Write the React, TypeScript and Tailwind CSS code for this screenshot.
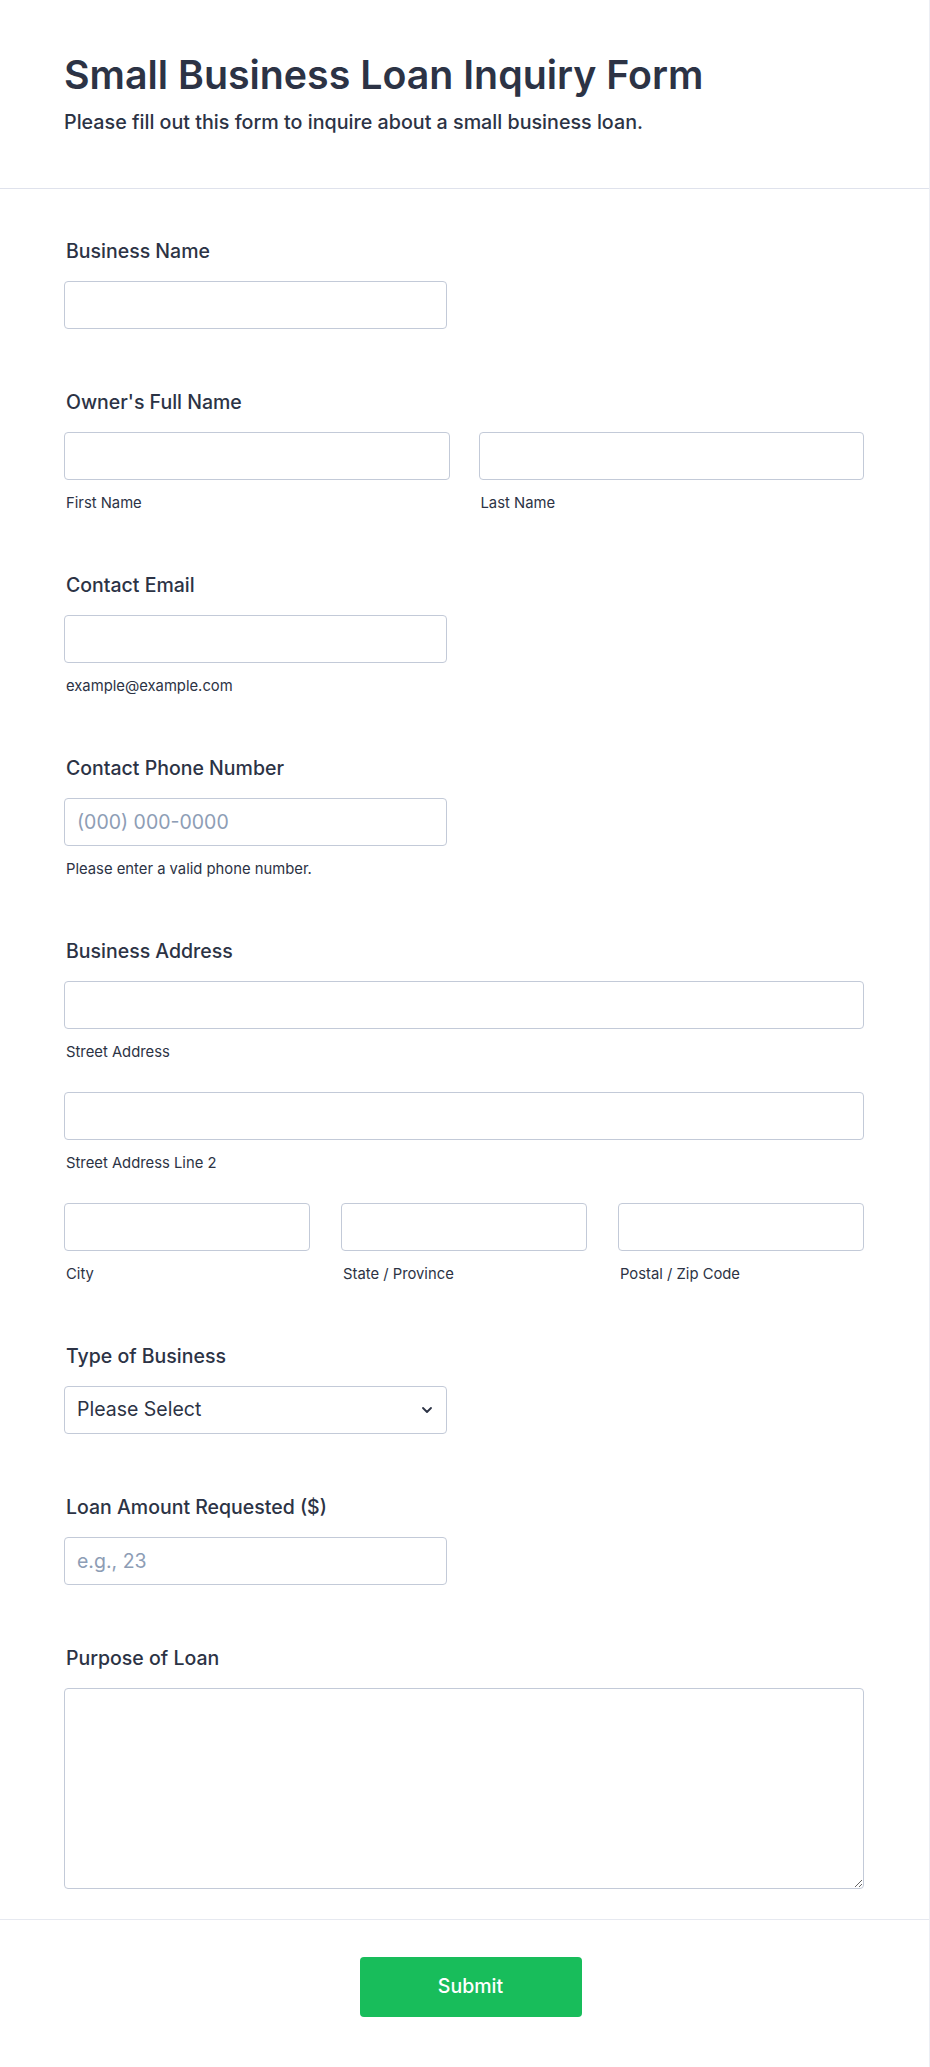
import { ChevronDown } from "lucide-react";

const inputCls =
  "block h-[48px] w-full rounded-[4px] border border-[#c3cad8] bg-white px-[12px] text-[19.5px] text-[#2c3345] placeholder:text-[#8d9db5] outline-none";

function Label({ children }: { children: React.ReactNode }) {
  return <label className="block pl-[2px] text-[19.5px] leading-[23px] font-medium">{children}</label>;
}

function SubLabel({ children }: { children: React.ReactNode }) {
  return <span className="mt-[15px] block pl-[2px] text-[14.8px] leading-[17px]">{children}</span>;
}

export default function App() {
  return (
    <div className="min-h-screen w-full border-r border-[#eceef4] bg-white font-['Inter',sans-serif] text-[#2c3345]">
      {/* Header */}
      <header className="border-b border-[#dfe2ec] pt-[52px] pr-[65px] pb-[54px] pl-[64px]">
        <h1 className="text-[39.3px] leading-[46px] font-semibold">Small Business Loan Inquiry Form</h1>
        <p className="mt-[13px] text-[19.7px] leading-[23px] font-medium">
          Please fill out this form to inquire about a small business loan.
        </p>
      </header>

      {/* Fields */}
      <form className="flex flex-col gap-[62px] pt-[51px] pr-[65px] pb-[30px] pl-[64px]">
        <div>
          <Label>Business Name</Label>
          <input className={`${inputCls} mt-[18px] !w-[383px]`} />
        </div>

        <div>
          <Label>Owner's Full Name</Label>
          <div className="mt-[18px] grid grid-cols-2 gap-x-[29px]">
            <div>
              <input className={inputCls} />
              <SubLabel>First Name</SubLabel>
            </div>
            <div>
              <input className={inputCls} />
              <SubLabel>Last Name</SubLabel>
            </div>
          </div>
        </div>

        <div>
          <Label>Contact Email</Label>
          <input type="email" className={`${inputCls} mt-[18px] !w-[383px]`} />
          <SubLabel>example@example.com</SubLabel>
        </div>

        <div>
          <Label>Contact Phone Number</Label>
          <input type="tel" placeholder="(000) 000-0000" className={`${inputCls} mt-[18px] !w-[383px]`} />
          <SubLabel>Please enter a valid phone number.</SubLabel>
        </div>

        <div>
          <Label>Business Address</Label>
          <input className={`${inputCls} mt-[18px]`} />
          <SubLabel>Street Address</SubLabel>
          <input className={`${inputCls} mt-[31px]`} />
          <SubLabel>Street Address Line 2</SubLabel>
          <div className="mt-[31px] grid grid-cols-3 gap-x-[31px]">
            <div>
              <input className={inputCls} />
              <SubLabel>City</SubLabel>
            </div>
            <div>
              <input className={inputCls} />
              <SubLabel>State / Province</SubLabel>
            </div>
            <div>
              <input className={inputCls} />
              <SubLabel>Postal / Zip Code</SubLabel>
            </div>
          </div>
        </div>

        <div>
          <Label>Type of Business</Label>
          <div className="relative mt-[18px] w-[383px]">
            <select className={`${inputCls} appearance-none pr-[40px]`} defaultValue="">
              <option value="">Please Select</option>
              <option>Sole Proprietorship</option>
              <option>Partnership</option>
              <option>LLC</option>
              <option>Corporation</option>
            </select>
            <ChevronDown
              className="pointer-events-none absolute top-1/2 right-[12px] h-[16px] w-[16px] -translate-y-1/2 text-[#2c3345]"
              strokeWidth={2.75}
            />
          </div>
        </div>

        <div>
          <Label>Loan Amount Requested ($)</Label>
          <input type="number" placeholder="e.g., 23" className={`${inputCls} mt-[18px] !w-[383px]`} />
        </div>

        <div>
          <Label>Purpose of Loan</Label>
          <textarea className="mt-[18px] block h-[201px] w-full rounded-[4px] border border-[#c3cad8] bg-white px-[12px] py-[10px] text-[19.5px] outline-none" />
        </div>
      </form>

      {/* Footer */}
      <div className="flex justify-center border-t border-[#e6e9f0] pt-[37px] pb-[50px] pl-[12px]">
        <button
          type="button"
          className="h-[60px] w-[222px] rounded-[4px] bg-[#18bd5b] text-[19.5px] font-medium text-white"
        >
          Submit
        </button>
      </div>
    </div>
  );
}
